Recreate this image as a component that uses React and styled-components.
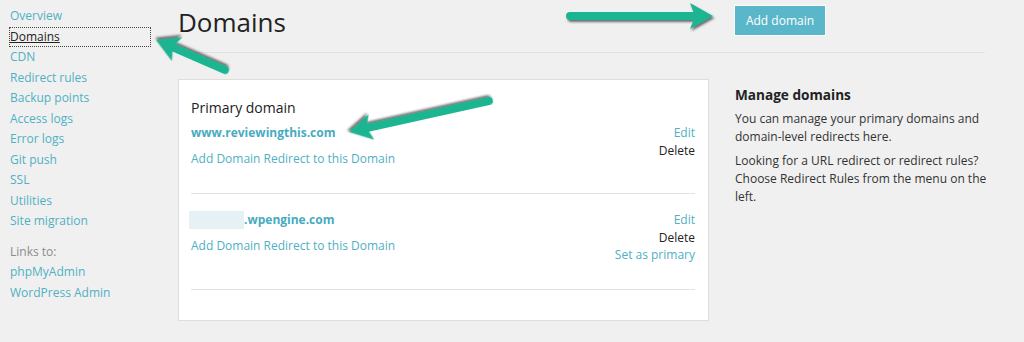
import React from 'react';
import styled, { createGlobalStyle } from 'styled-components';

const Global = createGlobalStyle`
  html, body { margin: 0; padding: 0; background: #f0f0f0; }
  body {
    font-family: "Open Sans", "Noto Sans", sans-serif;
    color: #333;
    width: 1024px;
    height: 342px;
    overflow: hidden;
  }
`;

const Page = styled.div`
  position: relative;
  display: flex;
  align-items: flex-start;
  height: 342px;
`;

const Sidebar = styled.nav`
  width: 140px;
  margin-left: 10px;
  padding-top: 6px;
  display: flex;
  flex-direction: column;
  font-size: 12px;
`;

const NavLink = styled.a`
  display: block;
  line-height: 18px;
  margin: 1.25px 0;
  color: ${p => (p.$active ? '#222' : '#4fb0c4')};
  text-decoration: ${p => (p.$active ? 'underline' : 'none')};
  outline: ${p => (p.$active ? '1px dotted #444' : 'none')};
  cursor: pointer;
`;

const SideLabel = styled.div`
  margin-top: 11px;
  line-height: 18px;
  margin-bottom: 1.25px;
  color: #8c8c8c;
`;

const Main = styled.main`
  margin-left: 28px;
  width: 807px;
  display: grid;
  grid-template-columns: 531px 1fr;
  column-gap: 26px;
  align-items: start;
`;

const Header = styled.header`
  grid-column: 1 / -1;
  display: grid;
  grid-template-columns: 531px 1fr;
  column-gap: 26px;
  align-items: start;
  height: 53px;
  box-sizing: border-box;
  border-bottom: 1px solid #e2e2e2;
`;

const Title = styled.h1`
  margin: 6px 0 0;
  font-size: 26px;
  line-height: 32px;
  font-weight: 400;
  color: #222;
`;

const Button = styled.button`
  justify-self: start;
  margin-top: 6px;
  width: 90px;
  height: 29px;
  background: #5ab7c9;
  color: #fff;
  border: none;
  box-shadow: 0 0 0 1px #fbfbfb;
  font-family: inherit;
  font-size: 12px;
  padding: 0;
`;

const Card = styled.section`
  margin-top: 26px;
  background: #fff;
  border: 1px solid #dedede;
  padding: 18px 13px 30px 12px;
`;

const CardHeading = styled.h2`
  margin: 0 0 6px;
  font-size: 14px;
  line-height: 20px;
  font-weight: 400;
  color: #222;
`;

const DomainRow = styled.div`
  display: flex;
  justify-content: space-between;
  align-items: flex-start;
  padding-bottom: 25px;
  border-bottom: 1px solid #e3e3e3;
  & + & { margin-top: 17px; }
`;

const DomainInfo = styled.div`
  display: flex;
  flex-direction: column;
  font-size: 12px;
  line-height: 18px;
`;

const DomainName = styled.a`
  font-weight: 700;
  color: #47abc0;
  display: flex;
  align-items: center;
`;

const Redacted = styled.span`
  display: inline-block;
  width: 55px;
  height: 18px;
  margin-left: -2px;
  background: #e6f1f5;
`;

const RedirectLink = styled.a`
  margin-top: 8px;
  color: #4fb0c4;
`;

const Actions = styled.div`
  display: flex;
  flex-direction: column;
  align-items: flex-end;
  font-size: 12px;
  line-height: 17.5px;
`;

const Action = styled.a`
  color: ${p => (p.$plain ? '#222' : '#4fb0c4')};
`;

const Aside = styled.aside`
  margin-top: 32px;
  margin-right: -8px;
  font-size: 12px;
  line-height: 18px;
  color: #333;
  h3 {
    margin: 0 0 5px;
    font-size: 13.6px;
    line-height: 20px;
    font-weight: 700;
    color: #222;
  }
  p { margin: 0 0 6px; }
`;

const Overlay = styled.svg`
  position: absolute;
  left: 0;
  top: 0;
  width: 1024px;
  height: 342px;
  pointer-events: none;
`;

function Arrow({ x1, y1, x2, y2 }) {
  const dx = x2 - x1;
  const dy = y2 - y1;
  const len = Math.hypot(dx, dy);
  const ang = (Math.atan2(dy, dx) * 180) / Math.PI;
  return (
    <g transform={`translate(${x2} ${y2}) rotate(${ang})`} filter="url(#arrowShadow)">
      <line x1={-len} y1={0} x2={-16} y2={0} stroke="#1eb592" strokeWidth="8" strokeLinecap="round" />
      <polygon points="0,0 -23,-13 -18,0 -23,13" fill="#1eb592" strokeLinejoin="round" />
    </g>
  );
}

const navItems = [
  'Overview', 'Domains', 'CDN', 'Redirect rules', 'Backup points', 'Access logs',
  'Error logs', 'Git push', 'SSL', 'Utilities', 'Site migration',
];

export default function App() {
  return (
    <>
      <Global />
      <Page>
        <Sidebar>
          {navItems.map(item => (
            <NavLink key={item} $active={item === 'Domains'}>{item}</NavLink>
          ))}
          <SideLabel>Links to:</SideLabel>
          <NavLink>phpMyAdmin</NavLink>
          <NavLink>WordPress Admin</NavLink>
        </Sidebar>
        <Main>
          <Header>
            <Title>Domains</Title>
            <Button>Add domain</Button>
          </Header>
          <Card>
            <CardHeading>Primary domain</CardHeading>
            <DomainRow>
              <DomainInfo>
                <DomainName>www.reviewingthis.com</DomainName>
                <RedirectLink>Add Domain Redirect to this Domain</RedirectLink>
              </DomainInfo>
              <Actions>
                <Action>Edit</Action>
                <Action $plain>Delete</Action>
              </Actions>
            </DomainRow>
            <DomainRow>
              <DomainInfo>
                <DomainName><Redacted />.wpengine.com</DomainName>
                <RedirectLink>Add Domain Redirect to this Domain</RedirectLink>
              </DomainInfo>
              <Actions>
                <Action>Edit</Action>
                <Action $plain>Delete</Action>
                <Action>Set as primary</Action>
              </Actions>
            </DomainRow>
          </Card>
          <Aside>
            <h3>Manage domains</h3>
            <p>You can manage your primary domains and domain-level redirects here.</p>
            <p>Looking for a URL redirect or redirect rules? Choose Redirect Rules from the menu on the left.</p>
          </Aside>
        </Main>
        <Overlay viewBox="0 0 1024 342">
          <defs>
            <filter id="arrowShadow" x="-20%" y="-50%" width="140%" height="200%">
              <feDropShadow dx="1.5" dy="2" stdDeviation="1.2" floodColor="#333" floodOpacity="0.7" />
            </filter>
          </defs>
          <Arrow x1={225} y1={70} x2={156} y2={40} />
          <Arrow x1={570} y1={16} x2={713} y2={16} />
          <Arrow x1={489} y1={101} x2={349} y2={132} />
        </Overlay>
      </Page>
    </>
  );
}
